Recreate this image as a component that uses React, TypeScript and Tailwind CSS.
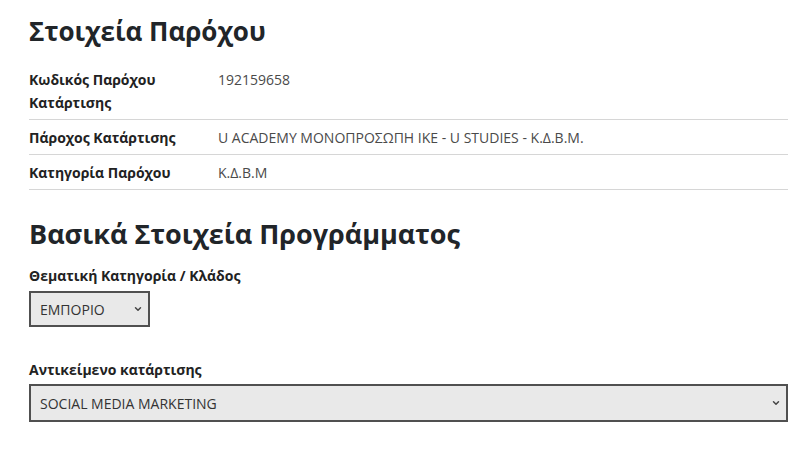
import { ChevronDown } from 'lucide-react'

const rows = [
  { label: 'Κωδικός Παρόχου Κατάρτισης', value: '192159658' },
  { label: 'Πάροχος Κατάρτισης', value: 'U ACADEMY ΜΟΝΟΠΡΟΣΩΠΗ ΙΚΕ - U STUDIES - Κ.Δ.Β.Μ.' },
  { label: 'Κατηγορία Παρόχου', value: 'Κ.Δ.Β.Μ' },
]

function Select({ value, className }: { value: string; className: string }) {
  return (
    <div className={`relative ${className}`}>
      <select
        defaultValue={value}
        className="w-full h-full appearance-none bg-[#e9e9e9] border-2 border-[#505050] pl-[9px] pr-6 text-[14px] text-[#333] outline-none"
      >
        <option>{value}</option>
      </select>
      <ChevronDown
        size={10}
        strokeWidth={3.5}
        className="pointer-events-none absolute right-[7px] top-1/2 -translate-y-1/2 text-[#444]"
      />
    </div>
  )
}

export default function App() {
  return (
    <div className="min-h-[452px] bg-white px-[29px] pt-[11px] text-[#212529]" style={{ fontFamily: '"Open Sans", "Noto Sans", sans-serif' }}>
      <h2 className="text-[26px] font-bold leading-[40px] mb-[11px]">Στοιχεία Παρόχου</h2>

      <table className="w-[759px] text-[14px] leading-[23px]">
        <tbody>
          {rows.map((r) => (
            <tr key={r.label} className="border-b border-[#d6d6d6] align-top">
              <td className="w-[189px] pt-[6px] pb-[5px] pr-6 font-bold text-[#222]">{r.label}</td>
              <td className="pt-[6px] pb-[5px] text-[#4a4a4a]">{r.value}</td>
            </tr>
          ))}
        </tbody>
      </table>

      <h2 className="text-[27px] font-bold leading-[40px] mt-[24px] mb-[13px]">Βασικά Στοιχεία Προγράμματος</h2>

      <label className="block text-[14px] font-bold leading-[18px] text-[#222] mb-[6px]">Θεματική Κατηγορία / Κλάδος</label>
      <Select value="ΕΜΠΟΡΙΟ" className="w-[121px] h-[36px]" />

      <label className="block text-[14px] font-bold leading-[18px] text-[#222] mt-[34px] mb-[5px]">Αντικείμενο κατάρτισης</label>
      <Select value="SOCIAL MEDIA MARKETING" className="w-[759px] h-[38px]" />
    </div>
  )
}
